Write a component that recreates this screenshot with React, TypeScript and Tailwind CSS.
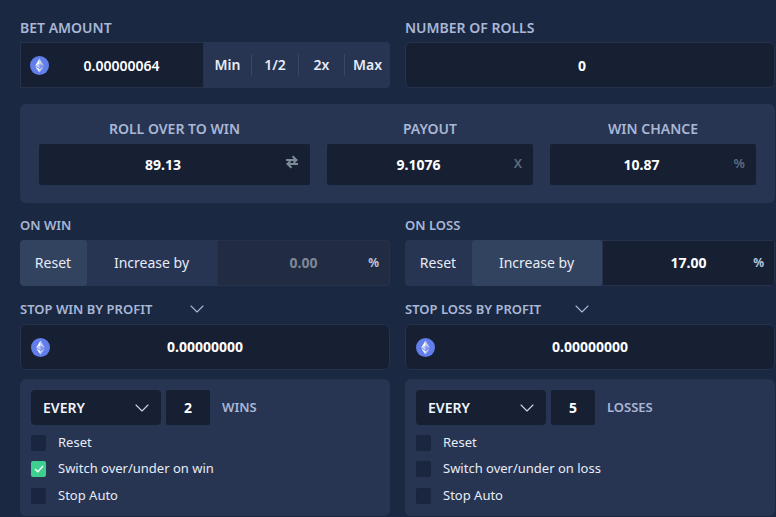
import type { ReactNode } from 'react'
import { ChevronDown } from 'lucide-react'

const EthIcon = () => (
  <svg width="19" height="19" viewBox="0 0 19 19" className="shrink-0">
    <circle cx="9.5" cy="9.5" r="9.5" fill="#627eea" />
    <path d="M9.5 2.6v5.1l4.3 2z" fill="#fff" fillOpacity="0.6" />
    <path d="M9.5 2.6L5.2 9.7l4.3-2z" fill="#fff" />
    <path d="M9.5 13v3.4l4.3-5.9z" fill="#fff" fillOpacity="0.6" />
    <path d="M9.5 16.4V13l-4.3-2.5z" fill="#fff" />
    <path d="M9.5 12.2l4.3-2.5-4.3-2z" fill="#fff" fillOpacity="0.2" />
    <path d="M5.2 9.7l4.3 2.5V7.7z" fill="#fff" fillOpacity="0.6" />
  </svg>
)

const SwapIcon = () => (
  <svg width="14" height="14" viewBox="0 0 14 14" fill="none" stroke="#7d8b99" strokeWidth="2">
    <path d="M1 5h10M7.5 1.2L11.5 5 8.5 8" />
    <path d="M13 9H3M6.5 12.8L2.5 9 5.5 6" />
  </svg>
)

const Label = ({ children, small }: { children: string; small?: boolean }) => (
  <div className={`font-semibold text-[#a9b7d6] ${small ? 'text-[13px] leading-[18px]' : 'text-sm leading-[19px]'}`}>
    {children}
  </div>
)

const Stat = ({ label, value, suffix, className }: { label: string; value: string; suffix: ReactNode; className: string }) => (
  <div className={className}>
    <div className="h-[19px] text-center text-sm font-semibold leading-[19px] text-[#a9b7d6]">{label}</div>
    <div className="relative mt-[6px] flex h-[41px] items-center justify-center rounded-xs bg-[#172033] pr-[23px] pt-px text-sm font-bold text-white">
      {value}
      <span className="absolute right-[11px] top-[11px] text-[13px] font-semibold leading-4 text-[#5f6b80]">{suffix}</span>
    </div>
  </div>
)

const Toggle = ({ active, inputActive, value }: { active: 'reset' | 'increase'; inputActive: boolean; value: string }) => (
  <div className="mt-[6px] flex h-[46px] overflow-hidden rounded bg-[#283552] text-sm text-[#e6ecf7]">
    <div className={`flex w-[67px] items-center justify-center rounded pr-px ${active === 'reset' ? 'bg-[#32435f]' : ''}`}>Reset</div>
    <div className={`flex w-[130px] items-center justify-center rounded pr-px ${active === 'increase' ? 'bg-[#32435f]' : ''}`}>Increase by</div>
    <div className={`relative flex flex-1 items-center justify-center border border-[#26324c] font-bold ${inputActive ? 'bg-[#172033] text-white' : 'bg-[#212c43] text-[#7d8797]'}`}>
      {value}
      <span className="absolute right-[10px] top-[14px] text-xs font-bold leading-4 text-[#b8c4dc]">%</span>
    </div>
  </div>
)

const StopRow = ({ label }: { label: string }) => (
  <div className="mt-[14px] flex h-[18px] items-center">
    <div className="w-[165px]"><Label small>{label}</Label></div>
    <ChevronDown size={24} strokeWidth={1.1} color="#a9b7d6" className="shrink-0" />
  </div>
)

const StopInput = () => (
  <div className="mt-[6px] flex h-[46px] items-center rounded-md border border-[#26324c] bg-[#172033] pl-[10px] pr-[29px]">
    <EthIcon />
    <div className="flex-1 text-center text-sm font-bold text-white">0.00000000</div>
  </div>
)

const Check = ({ label, checked }: { label: string; checked?: boolean }) => (
  <div className="flex h-[16px] items-center gap-[12px] text-[13px] text-[#e6ecf7]">
    <div className={`flex h-[16px] w-[15px] items-center justify-center rounded-xs ${checked ? 'bg-[#3ecf8e]' : 'bg-[#1a2540]'}`}>
      {checked && (
        <svg width="10" height="8" viewBox="0 0 10 8" fill="none" stroke="#fff" strokeWidth="1.3">
          <path d="M1 4l2.8 2.8L9 1" />
        </svg>
      )}
    </div>
    {label}
  </div>
)

const EveryPanel = ({ count, unit, switchLabel, checked }: { count: string; unit: string; switchLabel: string; checked?: boolean }) => (
  <div className="mt-[9px] h-[137px] rounded-md bg-[#283552] px-[11px] pt-[11px]">
    <div className="flex h-[35px] items-center">
      <div className="flex h-full w-[130px] items-center justify-between rounded bg-[#172033] pl-3 pr-[7px] text-sm font-semibold text-[#f0f4fb]">
        EVERY
        <ChevronDown size={24} strokeWidth={1.1} color="#cdd6e6" />
      </div>
      <div className="ml-[5px] flex h-full w-[44px] items-center justify-center rounded-xs bg-[#172033] text-sm font-bold text-white">{count}</div>
      <div className="ml-3 text-[13px] font-semibold text-[#a9b7d6]">{unit}</div>
    </div>
    <div className="mt-[9.5px] flex flex-col gap-[10.5px]">
      <Check label="Reset" />
      <Check label={switchLabel} checked={checked} />
      <Check label="Stop Auto" />
    </div>
  </div>
)

const App = () => {
  return (
    <div className="h-[517px] w-[776px] overflow-hidden bg-[#1a2842] pl-5 pr-px pt-[18px] font-['Noto_Sans',sans-serif]">
      <div className="grid grid-cols-2 gap-[15px]">
        <div>
          <Label>BET AMOUNT</Label>
          <div className="mt-[5px] flex h-[46px] rounded bg-[#283552]">
            <div className="flex w-[184px] shrink-0 items-center border border-[#26324c] bg-[#172033] pl-[9px] pr-[9px] pt-px">
              <EthIcon />
              <div className="flex-1 text-center text-sm font-semibold text-white">0.00000064</div>
            </div>
            <div className="flex flex-1 items-center text-sm font-semibold text-[#e6ecf7]">
              <div className="w-[47px] text-center">Min</div>
              <div className="h-[22px] w-px bg-[#3a4762]" />
              <div className="w-[46px] text-center">1/2</div>
              <div className="h-[22px] w-px bg-[#3a4762]" />
              <div className="w-[45px] text-center">2x</div>
              <div className="h-[22px] w-px bg-[#3a4762]" />
              <div className="flex-1 text-center">Max</div>
            </div>
          </div>
        </div>
        <div>
          <Label>NUMBER OF ROLLS</Label>
          <div className="mt-[5px] flex h-[46px] items-center justify-center rounded-md border border-[#26324c] bg-[#172033] pr-4 pt-px text-sm font-bold text-white">0</div>
        </div>
      </div>

      <div className="mt-4 flex h-[99px] gap-[17px] rounded-md bg-[#283552] px-[19px] pt-[15px]">
        <Stat className="w-[271px]" label="ROLL OVER TO WIN" value="89.13" suffix={<SwapIcon />} />
        <Stat className="w-[206px]" label="PAYOUT" value="9.1076" suffix="X" />
        <Stat className="w-[206px]" label="WIN CHANCE" value="10.87" suffix="%" />
      </div>

      <div className="mt-[13px] grid grid-cols-2 gap-[15px]">
        <div>
          <Label small>ON WIN</Label>
          <Toggle active="reset" inputActive={false} value="0.00" />
          <StopRow label="STOP WIN BY PROFIT" />
          <StopInput />
          <EveryPanel count="2" unit="WINS" switchLabel="Switch over/under on win" checked />
        </div>
        <div>
          <Label small>ON LOSS</Label>
          <Toggle active="increase" inputActive value="17.00" />
          <StopRow label="STOP LOSS BY PROFIT" />
          <StopInput />
          <EveryPanel count="5" unit="LOSSES" switchLabel="Switch over/under on loss" />
        </div>
      </div>
    </div>
  )
}

export default App
